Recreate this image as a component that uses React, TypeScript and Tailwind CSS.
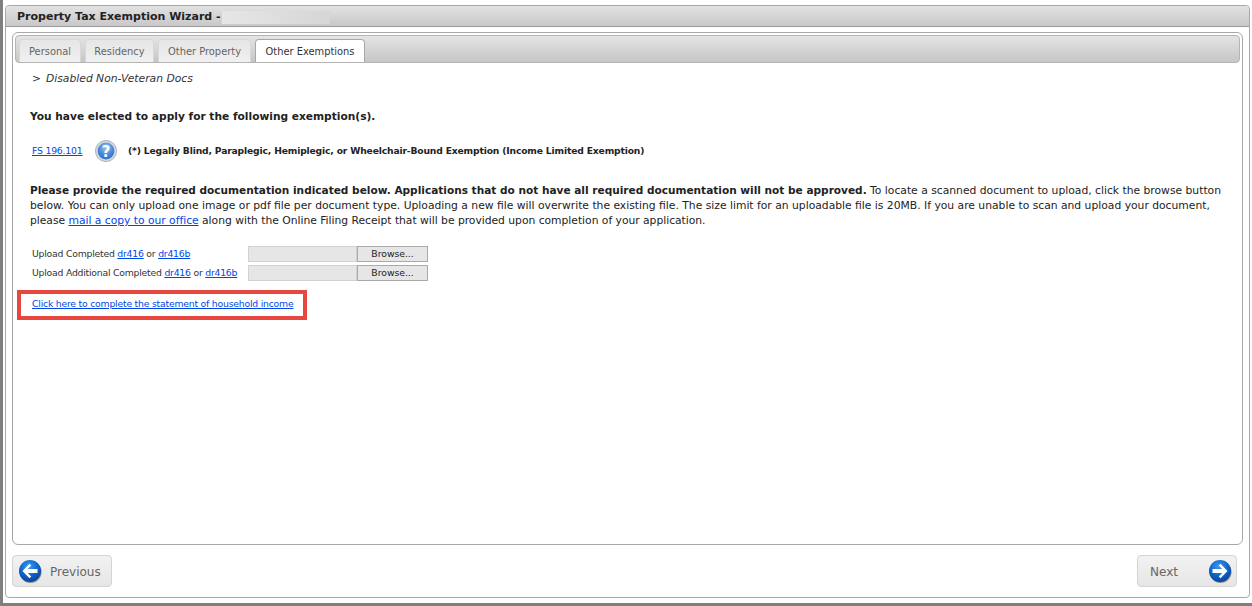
const font = "[font-family:'DejaVu_Sans',Verdana,sans-serif]"
const link = 'text-[#0047e6] underline'

function ArrowIcon({ dir }: { dir: 'left' | 'right' }) {
    const id = `arrow-${dir}`
    return (
        <svg width="24" height="24" viewBox="0 0 24 24" className="shrink-0">
            <defs>
                <radialGradient id={id} cx="45%" cy="30%" r="75%">
                    <stop offset="0%" stopColor="#3f9cf0" />
                    <stop offset="55%" stopColor="#0f64c8" />
                    <stop offset="100%" stopColor="#093f92" />
                </radialGradient>
            </defs>
            <circle cx="12.6" cy="13" r="11" fill="#444" opacity="0.55" />
            <circle cx="12" cy="12" r="11" fill={`url(#${id})`} />
            <path
                d={dir === 'left' ? 'M4.5 12 L11.5 4.8 L13.2 6.5 L9.8 9.9 L19.5 9.9 L19.5 14.1 L9.8 14.1 L13.2 17.5 L11.5 19.2 Z' : 'M19.5 12 L12.5 4.8 L10.8 6.5 L14.2 9.9 L4.5 9.9 L4.5 14.1 L14.2 14.1 L10.8 17.5 L12.5 19.2 Z'}
                fill="#fff"
            />
        </svg>
    )
}

function HelpIcon() {
    return (
        <svg width="22" height="22" viewBox="0 0 22 22" className="shrink-0">
            <defs>
                <radialGradient id="help" cx="50%" cy="30%" r="75%">
                    <stop offset="0%" stopColor="#a2c6f0" />
                    <stop offset="55%" stopColor="#4a8ad8" />
                    <stop offset="100%" stopColor="#2a6cc4" />
                </radialGradient>
            </defs>
            <circle cx="11" cy="11" r="10.6" fill="#d6dae0" stroke="#a0a6b0" strokeWidth="0.8" />
            <circle cx="11" cy="11" r="8.4" fill="url(#help)" />
            <text x="11" y="16.5" textAnchor="middle" fontSize="15" fontWeight="700" fill="#fff" fontFamily="DejaVu Sans">?</text>
        </svg>
    )
}

function Tab({ label, active, w }: { label: string; active?: boolean; w: string }) {
    return (
        <div className={`${w} h-[23px] pt-[3px] flex items-center justify-center rounded-t-[4px] border border-b-0 text-[9.9px] ${active ? 'bg-white border-[#a8a8a8] text-[#333]' : 'bg-gradient-to-b from-[#e6e6e6] to-[#f0f0f0] border-[#d8d8d8] text-[#666]'}`}>
            {label}
        </div>
    )
}

function NavButton({ label, dir }: { label: string; dir: 'left' | 'right' }) {
    return (
        <div className={`w-[100px] h-[32px] flex items-center rounded-[4px] border border-[#d4d4d4] bg-gradient-to-b from-[#f2f2f2] to-[#e6e6e6] text-[12px] text-[#666] ${dir === 'left' ? 'pl-[5px] gap-[8px]' : 'pl-[12px] justify-between pr-[4px]'}`}>
            {dir === 'left' && <ArrowIcon dir="left" />}
            <span className="pt-[2px]">{label}</span>
            {dir === 'right' && <ArrowIcon dir="right" />}
        </div>
    )
}

function UploadRow({ label }: { label: string }) {
    return (
        <div className="flex items-center h-[16px]">
            <div className="w-[216px] text-[9.3px] tracking-[-0.23px] text-[#333] whitespace-nowrap">
                {label} <a className={link}>dr416</a> or <a className={link}>dr416b</a>
            </div>
            <div className="w-[109px] h-[16px] bg-[#e6e6e6] border border-[#d2d2d2]" />
            <div className="w-[71px] h-[16px] bg-[#e6e6e6] border border-[#aaa] flex items-center justify-center text-[9.3px] tracking-[-0.05px] text-[#222]">
                Browse...
            </div>
        </div>
    )
}

export default function App() {
    return (
        <div className={`${font} w-[1252px] h-[606px] overflow-hidden bg-white flex flex-col`}>
            <div className="flex-1 min-h-0 flex border-l-[3px] border-[#7f7f7f] pl-[2px] pr-[2px] pt-[5px] pb-[5px]">
                <div className="flex-1 flex flex-col border border-[#a8a8a8] rounded-[4px] bg-white">
                    {/* Title */}
                    <div className="h-[21px] shrink-0 flex items-center pl-[11px] rounded-t-[4px] bg-gradient-to-b from-[#e2e2e2] to-[#c8c8c8] border-b border-[#999]">
                        <span className="pt-[2px] font-bold text-[11px] text-[#222] whitespace-nowrap">Property Tax Exemption Wizard -</span>
                        <div className="ml-[1px] mt-[2px] w-[108px] h-[13px] bg-gradient-to-r from-[#e6e6e6] to-[#d6d6d6]" />
                    </div>

                    <div className="flex-1 flex flex-col px-[6px] pt-[5px] pb-[10px]">
                        {/* Inner panel */}
                        <div className="h-[513px] border border-[#a8a8a8] rounded-[6px] p-[2px] pb-0 flex flex-col">
                            <div className="h-[28px] shrink-0 flex items-end gap-[4px] pl-[3px] rounded-[4px] bg-gradient-to-b from-[#e4e4e4] to-[#c6c6c6] border border-[#b4b4b4]">
                                <Tab label="Personal" w="w-[62px]" />
                                <Tab label="Residency" w="w-[69px]" />
                                <Tab label="Other Property" w="w-[93px]" />
                                <Tab label="Other Exemptions" w="w-[110px]" active />
                            </div>

                            <div className="pl-[14px] pr-[8px] text-[#222]">
                                <p className="mt-[9px] pl-[3px] italic text-[10.75px] leading-[14px] text-[#333] whitespace-nowrap">
                                    <span className="inline-block w-[14px]">&gt;</span>Disabled Non-Veteran Docs
                                </p>
                                <p className="mt-[23px] ml-[1px] font-bold text-[10.63px] leading-[15px]">You have elected to apply for the following exemption(s).</p>

                                <div className="mt-[16px] pl-[3px] flex items-center h-[22px]">
                                    <a className={`text-[9.3px] tracking-[-0.2px] w-[63px] ${link}`}>FS 196.101</a>
                                    <HelpIcon />
                                    <span className="ml-[11px] font-bold text-[9.2px] tracking-[-0.16px] whitespace-nowrap">(*) Legally Blind, Paraplegic, Hemiplegic, or Wheelchair-Bound Exemption (Income Limited Exemption)</span>
                                </div>

                                <div className="mt-[21px] ml-[1px] text-[10.75px] leading-[15px]">
                                    <p className="whitespace-nowrap"><b className="text-[10.55px]">Please provide the required documentation indicated below. Applications that do not have all required documentation will not be approved.</b> To locate a scanned document to upload, click the browse button</p>
                                    <p className="whitespace-nowrap">below. You can only upload one image or pdf file per document type. Uploading a new file will overwrite the existing file. The size limit for an uploadable file is 20MB. If you are unable to scan and upload your document,</p>
                                    <p className="whitespace-nowrap tracking-[-0.02px]">please <a className={link}>mail a copy to our office</a> along with the Online Filing Receipt that will be provided upon completion of your application.</p>
                                </div>

                                <div className="mt-[18px] pl-[3px] flex flex-col gap-[3px]">
                                    <UploadRow label="Upload Completed" />
                                    <UploadRow label="Upload Additional Completed" />
                                </div>

                                <div className="mt-[9px] -ml-[12px] w-[290px] h-[30px] border-[4px] border-[#e8473f] flex items-center pl-[11px] pb-[2px]">
                                    <a className={`text-[9.3px] tracking-[-0.22px] whitespace-nowrap ${link}`}>Click here to complete the statement of household income</a>
                                </div>
                            </div>
                        </div>

                        {/* Footer */}
                        <div className="mt-[10px] flex justify-between pr-[6px]">
                            <NavButton label="Previous" dir="left" />
                            <NavButton label="Next" dir="right" />
                        </div>
                    </div>
                </div>
            </div>
            <div className="h-[3px] shrink-0 bg-[#7f7f7f]" />
        </div>
    )
}
